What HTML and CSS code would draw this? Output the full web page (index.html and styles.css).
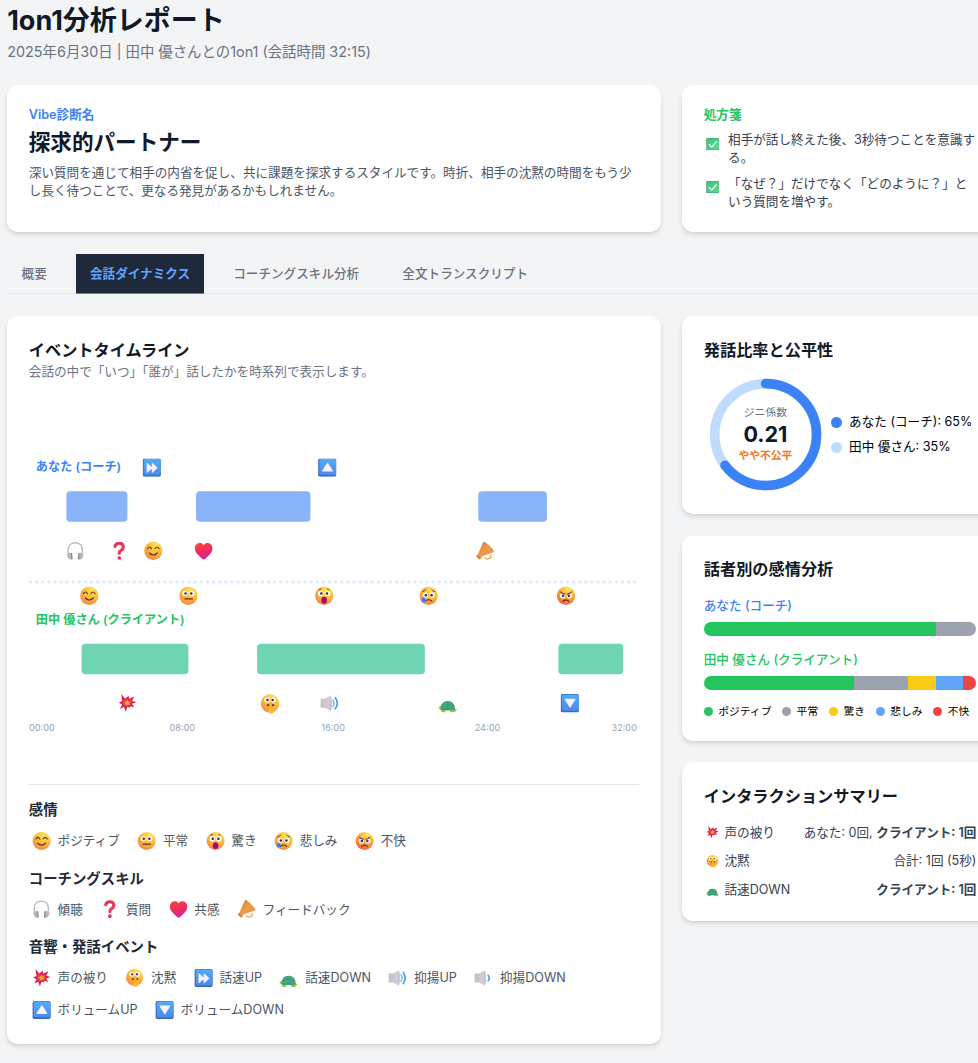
FILE: index.html
```html
<!DOCTYPE html>
<html lang="ja">
<head>
<meta charset="utf-8">
<title>1on1分析レポート</title>
<link rel="stylesheet" href="styles.css">
</head>
<body>
<svg class="sprite" aria-hidden="true">
  <defs>
    <radialGradient id="g-face" cx="0.65" cy="0.2" r="0.95">
      <stop offset="0" stop-color="#ffe45c"/><stop offset="0.5" stop-color="#fcb735"/><stop offset="0.85" stop-color="#f58a45"/><stop offset="1" stop-color="#ee6a78"/>
    </radialGradient>
    <radialGradient id="g-angry" cx="0.65" cy="0.15" r="0.95">
      <stop offset="0" stop-color="#ffe95c"/><stop offset="0.5" stop-color="#fda835"/><stop offset="0.85" stop-color="#f4703f"/><stop offset="1" stop-color="#ee5a88"/>
    </radialGradient>
    <linearGradient id="g-blue" x1="0" y1="0" x2="0" y2="1">
      <stop offset="0" stop-color="#54abf8"/><stop offset="1" stop-color="#4a8cec"/>
    </linearGradient>
    <linearGradient id="g-red" x1="0.3" y1="0" x2="0.6" y2="1">
      <stop offset="0" stop-color="#fb4040"/><stop offset="0.5" stop-color="#f02c60"/><stop offset="1" stop-color="#dc1ca8"/>
    </linearGradient>
    <linearGradient id="g-question" gradientUnits="userSpaceOnUse" x1="10" y1="2" x2="18" y2="31">
      <stop offset="0" stop-color="#e0305c"/><stop offset="0.5" stop-color="#f03858"/><stop offset="1" stop-color="#ee2a62"/>
    </linearGradient>
    <linearGradient id="g-horn" x1="0" y1="0" x2="1" y2="1">
      <stop offset="0" stop-color="#bd8448"/><stop offset="0.5" stop-color="#ef9b45"/><stop offset="1" stop-color="#f58a5c"/>
    </linearGradient>
    <linearGradient id="g-grey" x1="0" y1="0" x2="1" y2="0">
      <stop offset="0" stop-color="#c3bcca"/><stop offset="1" stop-color="#d8d0dc"/>
    </linearGradient>
    <linearGradient id="g-green" x1="0" y1="0" x2="1" y2="1">
      <stop offset="0" stop-color="#3fc27e"/><stop offset="1" stop-color="#5cdc93"/>
    </linearGradient>
    <symbol id="i-check" viewBox="0 0 32 32">
      <rect width="32" height="32" rx="3" fill="#3f9d70"/><rect x="2" y="1" width="30" height="28" rx="3" fill="url(#g-green)"/>
      <path d="M7 16l7 7L26 9" fill="none" stroke="#fff" stroke-width="3" stroke-linecap="round" stroke-linejoin="round"/>
    </symbol>
    <symbol id="i-happy" viewBox="0 0 32 32">
      <circle cx="16" cy="16" r="16" fill="url(#g-face)"/>
      <path d="M6 12.500q3.500-6 7 0M19 12.500q3.500-6 7 0M9 20q7 7 14 0" fill="none" stroke="#5a3030" stroke-width="2" stroke-linecap="round"/>
    </symbol>
    <symbol id="i-neutral" viewBox="0 0 32 32">
      <circle cx="16" cy="16" r="16" fill="url(#g-face)"/>
      <circle cx="10" cy="12" r="4.500" fill="#fff"/><circle cx="22" cy="12" r="4.500" fill="#fff"/>
      <circle cx="11" cy="12" r="2.200" fill="#452440"/><circle cx="21" cy="12" r="2.200" fill="#452440"/>
      <path d="M10 21.500h13" stroke="#5a3030" stroke-width="2" stroke-linecap="round"/>
    </symbol>
    <symbol id="i-surprise" viewBox="0 0 32 32">
      <circle cx="16" cy="16" r="16" fill="url(#g-face)"/>
      <circle cx="10" cy="12" r="4.700" fill="#fff"/><circle cx="22" cy="12" r="4.700" fill="#fff"/>
      <circle cx="11" cy="12" r="2.200" fill="#452440"/><circle cx="21" cy="12" r="2.200" fill="#452440"/>
      <path d="M7 5.500l4-1.500M25 5.500l-4-1.500" stroke="#5a3030" stroke-width="1.500"/>
      <ellipse cx="16" cy="24" rx="5" ry="6" fill="#a3067e"/>
    </symbol>
    <symbol id="i-sad" viewBox="0 0 32 32">
      <circle cx="16" cy="16" r="16" fill="url(#g-face)"/>
      <circle cx="10" cy="15" r="4.600" fill="#fff"/><circle cx="22" cy="15" r="4.600" fill="#fff"/>
      <circle cx="11" cy="15" r="2.200" fill="#452440"/><circle cx="21" cy="15" r="2.200" fill="#452440"/>
      <path d="M5 9q4-1 6-4M27 9q-4-1-6-4" fill="none" stroke="#5a3030" stroke-width="1.600"/>
      <path d="M10.500 25.500q5.500-5.500 11 0" fill="none" stroke="#5a3030" stroke-width="2.200" stroke-linecap="round"/>
      <path d="M7 18q5 5 3.500 7.500a4 4 0 0 1-7 0Q2.500 23 7 18z" fill="#3b7df0"/>
    </symbol>
    <symbol id="i-angry" viewBox="0 0 32 32">
      <circle cx="16" cy="16" r="16" fill="url(#g-angry)"/>
      <circle cx="10" cy="16" r="4.500" fill="#fff"/><circle cx="22" cy="16" r="4.500" fill="#fff"/>
      <circle cx="11" cy="16" r="2.200" fill="#452440"/><circle cx="21" cy="16" r="2.200" fill="#452440"/>
      <path d="M7 9.500q2 3 7 3.500M25 9.500q-2 3-7 3.500" fill="none" stroke="#452430" stroke-width="1.800" stroke-linecap="round"/>
      <path d="M11 26q5-5 10 0" fill="none" stroke="#5a3030" stroke-width="2.200" stroke-linecap="round"/>
    </symbol>
    <symbol id="i-hush" viewBox="0 0 32 34">
      <circle cx="16" cy="16" r="16" fill="url(#g-face)"/>
      <circle cx="10.500" cy="10" r="4.500" fill="#fff"/><circle cx="21.500" cy="10" r="4.500" fill="#fff"/>
      <circle cx="11.500" cy="10" r="2.200" fill="#452440"/><circle cx="20.500" cy="10" r="2.200" fill="#452440"/>
      <path d="M12 19h1.500M20.500 19h1.500" stroke="#452430" stroke-width="3" stroke-linecap="round"/>
      <path d="M17 14.500q2 0 2 3V25q5-3 5.500 0 0 8-6 8.500-6 .500-6.500-6l3-3.500v-6.500q0-3 2-3z" fill="#ffb83a"/>
      <path d="M19 25v-7.500q0-3-2-3t-2 3V24l-3 3.500" fill="none" stroke="#ec8d2e" stroke-width="1.200"/>
    </symbol>
    <symbol id="i-fast" viewBox="0 0 32 32">
      <rect width="32" height="32" rx="3" fill="#3d6dba"/><rect x="2" y="1" width="30" height="28" rx="3" fill="url(#g-blue)"/>
      <path d="M8 9l8 7.500L8 24zM17 9l8 7.500L17 24z" fill="#f6f0ff" stroke="#f6f0ff" stroke-width="2" stroke-linejoin="round"/>
    </symbol>
    <symbol id="i-up" viewBox="0 0 32 32">
      <rect width="32" height="32" rx="3" fill="#3d6dba"/><rect x="2" y="1" width="30" height="28" rx="3" fill="url(#g-blue)"/>
      <path d="M16.500 8.500L25 22H8z" fill="#fbf0ff" stroke="#fbf0ff" stroke-width="2" stroke-linejoin="round"/>
    </symbol>
    <symbol id="i-down" viewBox="0 0 32 32">
      <rect width="32" height="32" rx="3" fill="#3d6dba"/><rect x="2" y="1" width="30" height="28" rx="3" fill="url(#g-blue)"/>
      <path d="M16.500 22.500L25 9H8z" fill="#fbf0ff" stroke="#fbf0ff" stroke-width="2" stroke-linejoin="round"/>
    </symbol>
    <symbol id="i-listen" viewBox="0 0 32 32">
      <path d="M3 21v-6C3 6 9 2 15.500 2S28 6 28 15v6" fill="none" stroke="#bdb9c2" stroke-width="2.500"/>
      <path d="M1 22q4-4 7-2l1 11q-2 1-4 0-4-3-4-9zM30 22q-4-4-7-2l-1 11q2 1 4 0 4-3 4-9z" fill="#bab6c0"/>
      <path d="M7.500 20h2.500l1 11-2.500.500zM23.500 20H21l-1 11 2.500.500z" fill="#8a8592"/>
    </symbol>
    <symbol id="i-question" viewBox="0 0 32 32">
      <path d="M9 8.500q1.500-5.500 7.500-5.500t7 5.500q0 5-4 7-3 1.500-3 5" fill="none" stroke="url(#g-question)" stroke-width="5.500" stroke-linecap="round"/>
      <circle cx="16.500" cy="28.700" r="3.200" fill="#ee2a62"/>
    </symbol>
    <symbol id="i-heart" viewBox="0 0 32 32">
      <path d="M16 6C13 1.500 7 1.500 3.500 4.500-1 9 0 16 4 21q5 6 10 9.500 2 1.200 4 0Q23 27 28 21c4-5 5-12 .500-16.500C25 1.500 19 1.500 16 6z" fill="url(#g-red)"/>
    </symbol>
    <symbol id="i-horn" viewBox="0 0 32 32">
      <path d="M16 27q0 4 4 3.500 5-.500 6-3v-5" fill="none" stroke="#f2b04e" stroke-width="2.500"/>
      <path d="M12 2q2-3 4.500-1 9 6 15 15 .500 2-2 3L11 25.500l-4.500 6L.500 26 4 21z" fill="url(#g-horn)"/>
      <path d="M.500 26l2-2.500 6 5-2 3z" fill="#e8773c"/>
    </symbol>
    <symbol id="i-clash" viewBox="0 0 32 32">
      <path d="M5 0l7 8 6-5 1 5 9-4-4 8 8 2-8 3 4 6-7-2-1 3-4-2-3 9-3-9-7 4 4-8-6-3 6-3z" fill="#e0145f"/>
      <path d="M9 6l4 5 4-3 1 3 5-2-2 4 4 2-4 2 1 3-4-1-2 2-2-2-2 5-1-6-4 2 2-5-3-2 4-1z" fill="#ec4a35"/>
      <path d="M15.500 10l2 3.500 4-.500-2.500 3 1 3.500-3.500-1L13 21v-4l-3-2 3.500-1z" fill="#fdb52c"/>
    </symbol>
    <symbol id="i-loud" viewBox="0 0 32 32">
      <path d="M1 8h7L17 3q2-.500 2 2v22q0 2.500-2 2L8 24H1q-1 0-1-1V9q0-1 1-1z" fill="url(#g-grey)"/>
      <ellipse cx="18" cy="16" rx="2" ry="12.500" fill="#c8bfce"/>
      <path d="M22 10q4 6 0 12" fill="none" stroke="#68bdf8" stroke-width="2.500" stroke-linecap="round"/>
      <path d="M26 6q7 10 0 20" fill="none" stroke="#4a93ee" stroke-width="2.800" stroke-linecap="round"/>
    </symbol>
    <symbol id="i-quiet" viewBox="0 0 32 32">
      <path d="M1 8h7L17 3q2-.500 2 2v22q0 2.500-2 2L8 24H1q-1 0-1-1V9q0-1 1-1z" fill="url(#g-grey)"/>
      <ellipse cx="18" cy="16" rx="2" ry="12.500" fill="#c8bfce"/>
      <path d="M24 11q4 5 0 10" fill="none" stroke="#4a93ee" stroke-width="2.600" stroke-linecap="round"/>
    </symbol>
    <symbol id="i-turtle" viewBox="0 0 32 32">
      <path d="M0 24q0-4 5-3l3 4-5 2q-3 0-3-3z" fill="#b5ce3c"/>
      <path d="M4 26h8v4q0 2-3 2H7q-3 0-3-3zM20 26h11q2 1-1 3l-1 2q-2 1-5 1t-4-2z" fill="#9bc53f"/>
      <path d="M3 27Q4 12 16 12t13 15q-13 3-26 0z" fill="#3c9a80"/>
      <path d="M9 18l4-3h6l4 3-3 4h-8zM5 24l4-1 3 4M27 24l-4-1-3 4" fill="none" stroke="#4fc05c" stroke-width="1.400"/>
    </symbol>
  </defs>
</svg>

<div class="page">
  <header class="page-head">
    <h1 class="page-title">1on1分析レポート</h1>
    <p class="page-meta">2025年6月30日 | 田中 優さんとの1on1 (会話時間 32:15)</p>
  </header>

  <div class="grid">
    <section class="card wide">
      <p class="eyebrow blue">Vibe診断名</p>
      <h2 class="vibe-name">探求的パートナー</h2>
      <p class="vibe-text">深い質問を通じて相手の内省を促し、共に課題を探求するスタイルです。時折、相手の沈黙の時間をもう少し長く待つことで、更なる発見があるかもしれません。</p>
    </section>
    <section class="card">
      <h2 class="eyebrow green">処方箋</h2>
      <ul class="advice">
        <li class="advice-item"><svg class="icon-small"><use href="#i-check"/></svg><span>相手が話し終えた後、3秒待つことを意識する。</span></li>
        <li class="advice-item"><svg class="icon-small"><use href="#i-check"/></svg><span>「なぜ？」だけでなく「どのように？」という質問を増やす。</span></li>
      </ul>
    </section>
  </div>

  <nav class="tabs">
    <button class="tab" type="button">概要</button>
    <button class="tab active" type="button">会話ダイナミクス</button>
    <button class="tab" type="button">コーチングスキル分析</button>
    <button class="tab" type="button">全文トランスクリプト</button>
  </nav>

  <main class="grid">
    <section class="card wide">
      <h2 class="card-title">イベントタイムライン</h2>
      <p class="card-note">会話の中で「いつ」「誰が」話したかを時系列で表示します。</p>

      <svg class="timeline" viewBox="0 0 800 400">
        <text class="lane coach" x="9" y="55">あなた (コーチ)</text>
        <rect class="talk-coach" x="49" y="81" width="80" height="40" rx="5"/>
        <rect class="talk-coach" x="219" y="81" width="150" height="40" rx="5"/>
        <rect class="talk-coach" x="589" y="81" width="90" height="40" rx="5"/>
        <use href="#i-fast" x="149" y="38" width="24" height="24"/>
        <use href="#i-up" x="379" y="38" width="24" height="24"/>
        <use href="#i-listen" x="49" y="147" width="24" height="24"/>
        <use href="#i-question" x="106" y="147" width="24" height="24"/>
        <use href="#i-happy" x="151" y="147" width="24" height="24"/>
        <use href="#i-heart" x="217" y="147" width="24" height="24"/>
        <use href="#i-horn" x="586" y="147" width="24" height="24"/>

        <line class="divider" x1="0" y1="200" x2="796" y2="200"/>

        <use href="#i-happy" x="67" y="206" width="24" height="24"/>
        <use href="#i-neutral" x="197" y="206" width="24" height="24"/>
        <use href="#i-surprise" x="375" y="206" width="24" height="24"/>
        <use href="#i-sad" x="512" y="206" width="24" height="24"/>
        <use href="#i-angry" x="692" y="206" width="24" height="24"/>
        <text class="lane client" x="9" y="255">田中 優さん (クライアント)</text>
        <rect class="talk-client" x="69" y="281" width="140" height="40" rx="5"/>
        <rect class="talk-client" x="299" y="281" width="220" height="40" rx="5"/>
        <rect class="talk-client" x="694" y="281" width="85" height="40" rx="5"/>
        <use href="#i-clash" x="117" y="347" width="24" height="24"/>
        <use href="#i-hush" x="304" y="347" width="24" height="26"/>
        <use href="#i-loud" x="382" y="347" width="24" height="24"/>
        <use href="#i-turtle" x="537" y="347" width="24" height="24"/>
        <use href="#i-down" x="697" y="347" width="24" height="24"/>

        <text class="tick" x="0" y="396">00:00</text>
        <text class="tick middle" x="201" y="396">08:00</text>
        <text class="tick middle" x="399" y="396">16:00</text>
        <text class="tick middle" x="601" y="396">24:00</text>
        <text class="tick end" x="797" y="396">32:00</text>
      </svg>

      <div class="legend">
        <div>
          <h3 class="legend-title">感情</h3>
          <ul class="legend-list">
            <li class="legend-item"><svg class="icon"><use href="#i-happy"/></svg>ポジティブ</li>
            <li class="legend-item"><svg class="icon"><use href="#i-neutral"/></svg>平常</li>
            <li class="legend-item"><svg class="icon"><use href="#i-surprise"/></svg>驚き</li>
            <li class="legend-item"><svg class="icon"><use href="#i-sad"/></svg>悲しみ</li>
            <li class="legend-item"><svg class="icon"><use href="#i-angry"/></svg>不快</li>
          </ul>
        </div>
        <div>
          <h3 class="legend-title">コーチングスキル</h3>
          <ul class="legend-list">
            <li class="legend-item"><svg class="icon"><use href="#i-listen"/></svg>傾聴</li>
            <li class="legend-item"><svg class="icon"><use href="#i-question"/></svg>質問</li>
            <li class="legend-item"><svg class="icon"><use href="#i-heart"/></svg>共感</li>
            <li class="legend-item"><svg class="icon"><use href="#i-horn"/></svg>フィードバック</li>
          </ul>
        </div>
        <div>
          <h3 class="legend-title">音響・発話イベント</h3>
          <ul class="legend-list">
            <li class="legend-item"><svg class="icon"><use href="#i-clash"/></svg>声の被り</li>
            <li class="legend-item"><svg class="icon"><use href="#i-hush"/></svg>沈黙</li>
            <li class="legend-item"><svg class="icon"><use href="#i-fast"/></svg>話速UP</li>
            <li class="legend-item"><svg class="icon"><use href="#i-turtle"/></svg>話速DOWN</li>
            <li class="legend-item"><svg class="icon"><use href="#i-loud"/></svg>抑揚UP</li>
            <li class="legend-item"><svg class="icon"><use href="#i-quiet"/></svg>抑揚DOWN</li>
            <li class="legend-item"><svg class="icon"><use href="#i-up"/></svg>ボリュームUP</li>
            <li class="legend-item"><svg class="icon"><use href="#i-down"/></svg>ボリュームDOWN</li>
          </ul>
        </div>
      </div>
    </section>

    <div class="side">
      <section class="card">
        <h2 class="card-title">発話比率と公平性</h2>
        <div class="ratio">
          <div class="donut">
            <svg class="donut-ring" viewBox="0 0 36 36">
              <circle class="ring-base" cx="18" cy="18" r="15.9155"/>
              <circle class="ring-value" cx="18" cy="18" r="15.9155" pathLength="100" stroke-dasharray="65 100" transform="rotate(-90 18 18)"/>
            </svg>
            <div class="donut-text">
              <span class="gini-label">ジニ係数</span>
              <span class="gini-value">0.21</span>
              <span class="gini-note">やや不公平</span>
            </div>
          </div>
          <ul class="ratio-list">
            <li class="ratio-item"><span class="dot dot-coach"></span>あなた (コーチ): 65%</li>
            <li class="ratio-item"><span class="dot dot-client"></span>田中 優さん: 35%</li>
          </ul>
        </div>
      </section>

      <section class="card">
        <h2 class="card-title">話者別の感情分析</h2>
        <div class="moods">
          <div class="mood">
            <p class="mood-name blue">あなた (コーチ)</p>
            <div class="bar"><span class="positive" style="width:85%"></span><span class="neutral" style="width:15%"></span></div>
          </div>
          <div class="mood">
            <p class="mood-name green">田中 優さん (クライアント)</p>
            <div class="bar"><span class="positive" style="width:55%"></span><span class="neutral" style="width:20%"></span><span class="surprise" style="width:10%"></span><span class="sad" style="width:10%"></span><span class="upset" style="width:5%"></span></div>
          </div>
          <ul class="mood-key">
            <li class="key-item"><span class="key-dot positive"></span>ポジティブ</li>
            <li class="key-item"><span class="key-dot neutral"></span>平常</li>
            <li class="key-item"><span class="key-dot surprise"></span>驚き</li>
            <li class="key-item"><span class="key-dot sad"></span>悲しみ</li>
            <li class="key-item"><span class="key-dot upset"></span>不快</li>
          </ul>
        </div>
      </section>

      <section class="card">
        <h2 class="card-title">インタラクションサマリー</h2>
        <ul class="summary">
          <li class="summary-row"><span class="summary-name"><svg class="icon-small"><use href="#i-clash"/></svg>声の被り</span><span>あなた: 0回, <b>クライアント: 1回</b></span></li>
          <li class="summary-row"><span class="summary-name"><svg class="icon-small"><use href="#i-hush"/></svg>沈黙</span><span>合計: 1回 (5秒)</span></li>
          <li class="summary-row"><span class="summary-name"><svg class="icon-small"><use href="#i-turtle"/></svg>話速DOWN</span><b>クライアント: 1回</b></li>
        </ul>
      </section>
    </div>
  </main>
</div>
</body>
</html>
```

FILE: styles.css
```css
* { box-sizing: border-box; margin: 0; padding: 0; }

/* Compact density: the whole report is shown at 90%. */
html { zoom: 0.9; background: #f3f4f6; overflow-x: hidden; }

body {
  padding: 6px 8px 12px;
  font-family: Inter, "Noto Sans CJK JP", sans-serif;
  font-size: 14px;
  line-height: 20px;
  color: #000;
}

ul { list-style: none; }
b { font-weight: 600; }
.sprite { position: absolute; width: 0; height: 0; }

.page { min-width: 1101px; }
.page-head { margin-bottom: 24px; }
.page-title { margin-bottom: 4px; font-size: 30px; line-height: 36px; font-weight: 700; color: #111827; }
.page-meta { font-size: 16px; line-height: 24px; color: #6b7280; }

.grid { display: grid; grid-template-columns: repeat(3, minmax(0, 1fr)); gap: 24px; align-items: start; }
.grid > .card { height: 100%; }
.wide { grid-column: span 2; }
.side { display: flex; flex-direction: column; gap: 24px; }

.card {
  padding: 24px;
  border-radius: 12px;
  background: #fff;
  box-shadow: 0 4px 6px -1px rgba(0, 0, 0, 0.1), 0 2px 4px -2px rgba(0, 0, 0, 0.1);
}
.card-title { font-size: 18px; line-height: 28px; font-weight: 600; color: #111827; }
.card-note { color: #6b7280; }

.blue { color: #3b82f6; }
.green { color: #22c55e; }

.eyebrow { font-size: 14px; line-height: 20px; font-weight: 600; }
.vibe-name { margin-top: 4px; font-size: 24px; line-height: 32px; font-weight: 700; color: #111827; }
.vibe-text { margin-top: 8px; color: #4b5563; }

.icon { flex: none; width: 28px; height: 20px; }
.icon-small { flex: none; width: 19px; height: 14px; }

.advice { display: flex; flex-direction: column; gap: 8px; margin-top: 8px; color: #374151; }
.advice-item { display: flex; align-items: flex-start; gap: 8px; }
.advice-item .icon-small { margin-top: 7px; }

.tabs { display: flex; gap: 16px; margin: 24px 0; border-bottom: 1px solid #e5e7eb; }
.tab {
  margin-bottom: -1px;
  padding: 12px 16px;
  border: 0;
  border-bottom: 2px solid transparent;
  background: none;
  font: inherit;
  font-weight: 500;
  color: #6b7280;
}
.tab.active { border-bottom-color: #3b82f6; background: #1e293b; font-weight: 600; color: #60a5fa; }

.timeline { display: block; width: 100%; height: 400px; margin: 24px 0; }
.lane { font-size: 16px; font-weight: 600; }
.coach { fill: #3b82f6; }
.client { fill: #22c55e; }
.talk-coach { fill: #3b82f6; fill-opacity: 0.6; }
.talk-client { fill: #10b981; fill-opacity: 0.6; }
.divider { stroke: #dbeafe; stroke-width: 3; stroke-dasharray: 4 4; }
.tick { font-size: 12px; fill: #9ca3af; }
.middle { text-anchor: middle; }
.end { text-anchor: end; }

.legend { display: flex; flex-direction: column; gap: 16px; padding-top: 16px; border-top: 1px solid #e5e7eb; }
.legend-title { margin-bottom: 8px; font-size: 16px; line-height: 24px; font-weight: 600; color: #1f2937; }
.legend-list { display: flex; flex-wrap: wrap; gap: 8px 16px; }
.legend-item { display: flex; align-items: center; gap: 4px; line-height: 28px; color: #4b5563; }

.ratio { display: flex; align-items: center; justify-content: space-around; margin-top: 16px; }
.donut { display: grid; width: 128px; height: 128px; }
.donut-ring, .donut-text { grid-area: 1 / 1; }
.donut-ring { width: 100%; height: 100%; }
.ring-base { fill: none; stroke: #bfdbfe; stroke-width: 3; }
.ring-value { fill: none; stroke: #3b82f6; stroke-width: 3; stroke-linecap: round; }
.donut-text { display: flex; flex-direction: column; align-items: center; justify-content: center; font-size: 12px; line-height: 16px; }
.gini-label { color: #6b7280; }
.gini-value { font-size: 24px; line-height: 32px; font-weight: 700; color: #111827; }
.gini-note { font-weight: 600; color: #f97316; }
.ratio-list { display: flex; flex-direction: column; gap: 8px; }
.ratio-item { display: flex; align-items: center; gap: 8px; white-space: nowrap; }
.dot { width: 12px; height: 12px; border-radius: 50%; }
.dot-coach { background: #3b82f6; }
.dot-client { background: #bfdbfe; }

.moods { display: flex; flex-direction: column; gap: 16px; margin-top: 16px; }
.mood-name { margin-bottom: 8px; font-weight: 500; }
.bar { display: flex; height: 16px; overflow: hidden; border-radius: 8px; }
.positive { background: #22c55e; }
.neutral { background: #9ca3af; }
.surprise { background: #facc15; }
.sad { background: #60a5fa; }
.upset { background: #ef4444; }
.mood-key { display: flex; gap: 12px; font-size: 12px; line-height: 16px; }
.key-item { display: flex; align-items: center; gap: 6px; white-space: nowrap; }
.key-dot { width: 10px; height: 10px; border-radius: 50%; }

.summary { display: flex; flex-direction: column; gap: 12px; margin-top: 16px; color: #374151; }
.summary-row { display: flex; justify-content: space-between; }
.summary-name { display: flex; align-items: center; gap: 4px; }
```
